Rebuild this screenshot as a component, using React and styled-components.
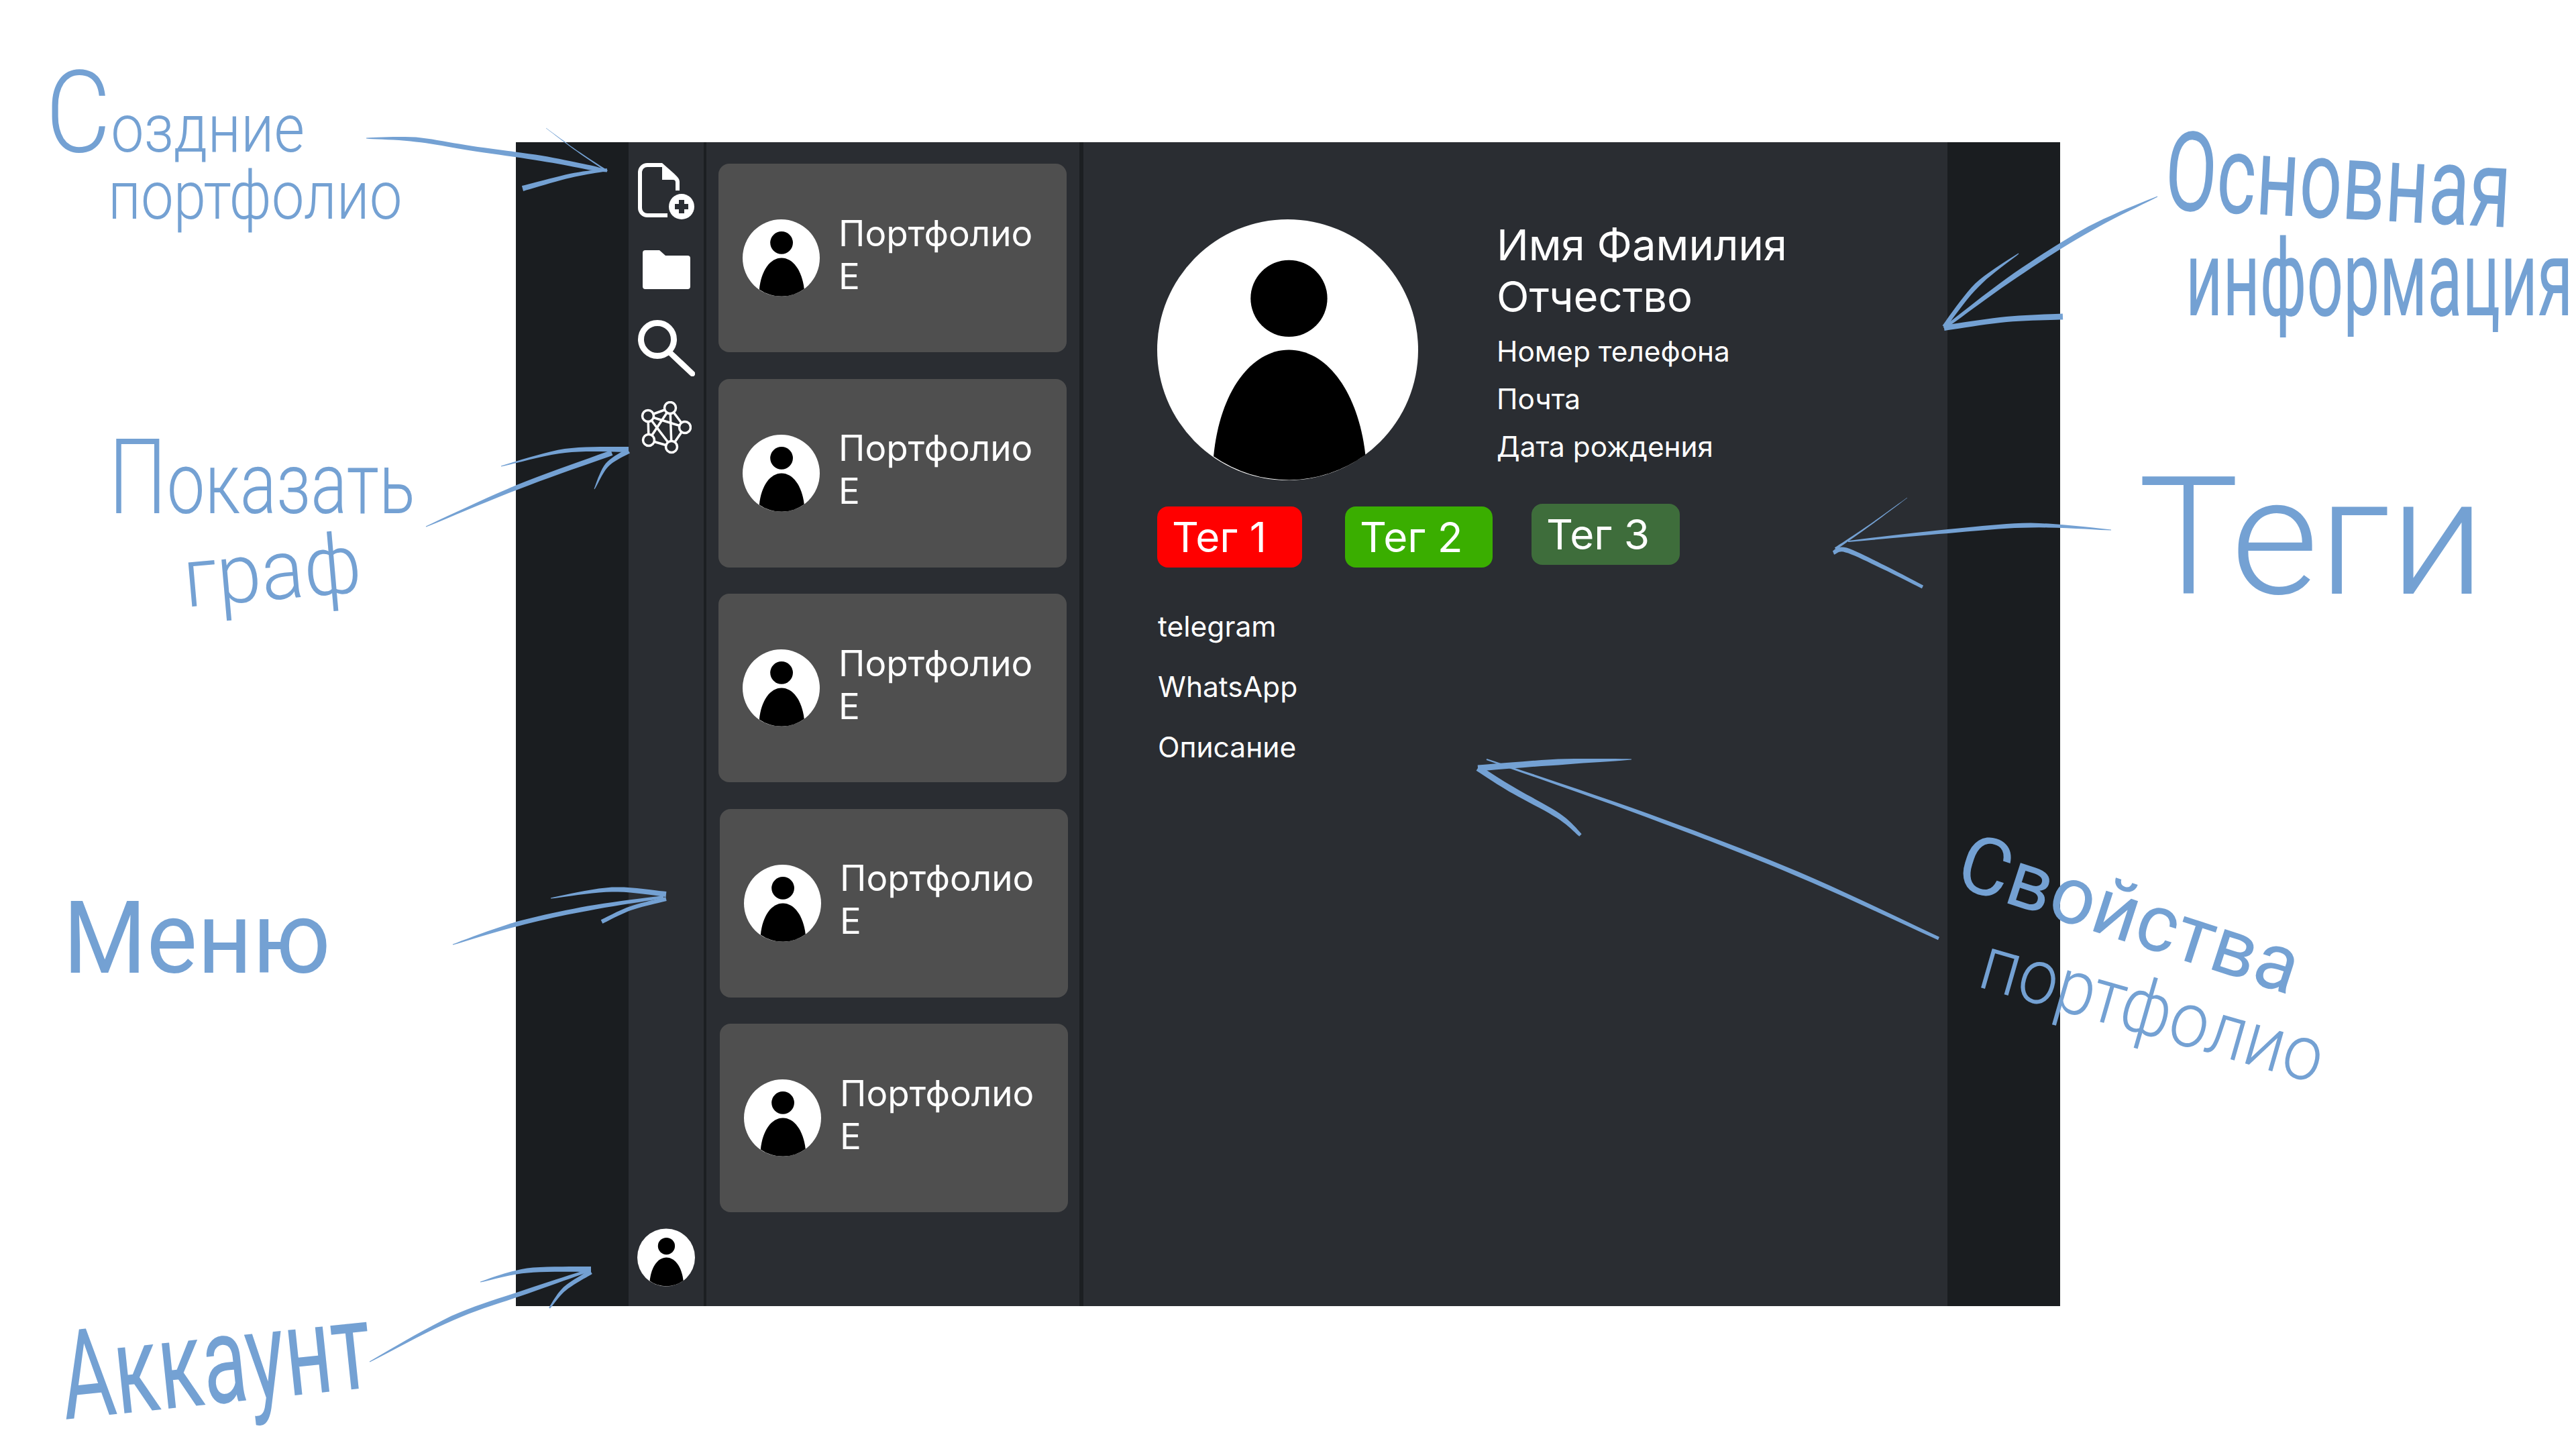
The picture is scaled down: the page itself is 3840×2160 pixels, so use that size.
import React from 'react';
import styled, { createGlobalStyle } from 'styled-components';

const GlobalStyle = createGlobalStyle`
    html, body {
        margin: 0;
        padding: 0;
        background: #fff;
    }
    body {
        font-family: "Inter", "Liberation Sans", sans-serif;
    }
`;

const Canvas = styled.div`
    position: relative;
    width: 3840px;
    height: 2160px;
    padding: 212px 0 0 769px;
    box-sizing: border-box;
    overflow: hidden;
    background: #fff;
`;

const Window = styled.div`
    display: flex;
    width: 2302px;
    height: 1735px;
    color: #fff;
    background: #2a2d32;
`;

const Strip = styled.div`
    flex: 0 0 ${({ $width }) => $width}px;
    background: #1a1d20;
`;

const Sidebar = styled.nav`
    flex: 0 0 112px;
    display: flex;
    flex-direction: column;
    align-items: center;
    padding: 31px 0 29px;
    border-right: 4px solid #1c1f22;
`;

const IconButton = styled.div`
    display: flex;
    margin-top: ${({ $top }) => $top || 0}px;
`;

const AccountSlot = styled.div`
    margin-top: auto;
    width: 86px;
    height: 87px;
`;

const ListPanel = styled.section`
    flex: 0 0 538px;
    display: flex;
    flex-direction: column;
    gap: 39.6px;
    padding: 32px 0 0 18px;
    border-right: 6px solid #1c1f22;
`;

const Card = styled.article`
    display: flex;
    align-items: center;
    gap: 28px;
    width: 519px;
    height: 281px;
    margin-left: ${({ $shift }) => ($shift ? 2 : 0)}px;
    padding-left: 36px;
    box-sizing: border-box;
    border-radius: 16px;
    background: #4f4f4f;
`;

const CardAvatar = styled.div`
    flex: 0 0 115px;
    height: 115px;
`;

const CardText = styled.div`
    padding-bottom: 10px;
    font-size: 53px;
    line-height: 64px;
`;

const Main = styled.main`
    flex: 1;
    padding: 115px 0 0 110px;
`;

const Profile = styled.div`
    display: flex;
    gap: 117px;
`;

const BigAvatar = styled.div`
    flex: 0 0 389px;
    height: 389px;
`;

const Name = styled.h1`
    margin: 0;
    font-size: 63.4px;
    font-weight: 400;
    line-height: 77px;
`;

const Details = styled.ul`
    margin: 7px 0 0;
    padding: 0;
    list-style: none;
    font-size: 42.3px;
    line-height: 71px;
`;

const TagRow = styled.div`
    display: flex;
    align-items: flex-start;
    margin-top: 35px;
`;

const Tag = styled.span`
    width: ${({ $width }) => $width}px;
    height: 91px;
    margin-top: ${({ $top }) => $top || 0}px;
    margin-left: ${({ $left }) => $left || 0}px;
    padding-left: 22px;
    box-sizing: border-box;
    border-radius: 16px;
    font-size: 62px;
    line-height: 91px;
    background: ${({ $color }) => $color};
`;

const Contacts = styled.ul`
    margin: 43px 0 0 1px;
    padding: 0;
    list-style: none;
    font-size: 42.5px;
    line-height: 90px;
`;

const Overlay = styled.svg`
    position: absolute;
    top: 0;
    left: 0;
    pointer-events: none;
`;

const Note = styled.span`
    position: absolute;
    left: ${({ $x }) => $x}px;
    top: ${({ $base, $size }) => $base - $size * 0.84}px;
    font-family: "Roboto", "Liberation Sans", sans-serif;
    font-size: ${({ $size }) => $size}px;
    font-weight: ${({ $weight }) => $weight || 300};
    line-height: 1;
    white-space: nowrap;
    color: #74a1d3;
    transform-origin: 0 84%;
    transform: rotate(${({ $rotate }) => $rotate || 0}deg) scaleX(${({ $stretch }) => $stretch});
`;

const Initial = styled.span`
    font-size: ${({ $size }) => $size}px;
    line-height: 0;
`;

// tapered marker stroke: points are [x, y, width]
const brush = (points) => {
    const smooth = [];
    for (let i = 0; i < points.length - 1; i++) {
        const p0 = points[Math.max(i - 1, 0)];
        const p1 = points[i];
        const p2 = points[i + 1];
        const p3 = points[Math.min(i + 2, points.length - 1)];
        for (let s = 0; s < 10; s++) {
            const t = s / 10;
            const at = (k) => 0.5 * (2 * p1[k] + (p2[k] - p0[k]) * t
                + (2 * p0[k] - 5 * p1[k] + 4 * p2[k] - p3[k]) * t * t
                + (3 * p1[k] - p0[k] - 3 * p2[k] + p3[k]) * t * t * t);
            smooth.push([at(0), at(1), p1[2] + (p2[2] - p1[2]) * t]);
        }
    }
    smooth.push(points[points.length - 1]);
    const left = [];
    const right = [];
    smooth.forEach((p, i) => {
        const a = smooth[Math.max(i - 1, 0)];
        const b = smooth[Math.min(i + 1, smooth.length - 1)];
        const dx = b[0] - a[0];
        const dy = b[1] - a[1];
        const len = Math.hypot(dx, dy) || 1;
        left.push(`${(p[0] - dy / len * p[2] / 2).toFixed(1)} ${(p[1] + dx / len * p[2] / 2).toFixed(1)}`);
        right.unshift(`${(p[0] + dy / len * p[2] / 2).toFixed(1)} ${(p[1] - dx / len * p[2] / 2).toFixed(1)}`);
    });
    return `M${left.join('L')}L${right.join('L')}Z`;
};

const strokes = [
    // создание
    [[546, 206, 1], [620, 208, 7], [702, 221, 7], [807, 236, 8], [880, 250, 7], [905, 255, 3]],
    [[814, 191, 0.5], [860, 225, 1.5], [905, 255, 2.5]],
    [[905, 253, 4], [850, 262, 6], [779, 281, 8]],
    // граф
    [[635, 785, 1], [772, 726, 7], [912, 675, 8]],
    [[747, 695, 1], [842, 672, 6], [937, 670, 8]],
    [[937, 672, 8], [905, 693, 6], [886, 729, 1]],
    // меню
    [[675, 1408, 1], [772, 1377, 7], [877, 1354, 7], [989, 1337, 4]],
    [[821, 1339, 1], [912, 1326, 7], [993, 1333, 8]],
    [[993, 1340, 6], [940, 1354, 6], [897, 1374, 6]],
    // аккаунт
    [[551, 2030, 1], [674, 1965, 7], [786, 1925, 7], [877, 1894, 4]],
    [[716, 1911, 1], [786, 1894, 7], [881, 1892, 8]],
    [[881, 1896, 7], [842, 1921, 6], [819, 1950, 2]],
    // основная информация
    [[3216, 293, 1], [3115, 341, 8], [3005, 410, 8], [2898, 489, 4]],
    [[3009, 378, 1], [2947, 425, 7], [2898, 487, 6]],
    [[2898, 489, 8], [2991, 476, 8], [3075, 472, 9]],
    // теги
    [[3147, 790, 1], [3027, 783, 7], [2904, 792, 6], [2755, 807, 2]],
    [[2843, 742, 0.5], [2787, 783, 2], [2736, 818, 4]],
    [[2733, 824, 6], [2752, 820, 7], [2809, 846, 6], [2866, 875, 5]],
    // свойства
    [[2890, 1399, 5], [2680, 1303, 7], [2457, 1216, 6], [2216, 1132, 2]],
    [[2432, 1132, 1], [2323, 1136, 9], [2203, 1145, 9]],
    [[2203, 1145, 9], [2252, 1176, 9], [2323, 1216, 8], [2356, 1245, 5]],
];

const Avatar = () => (
    <svg width="100%" height="100%" viewBox="0 0 100 100" style={{ display: 'block' }}>
        <circle cx="50" cy="50" r="50" fill="#fff" />
        <circle cx="50.5" cy="30.3" r="14.7" fill="#000" />
        <path d="M21.6 90.8C24 66 36 50 50.5 50C65 50 77 66 79.8 90.2A50 50 0 0 1 21.6 90.8Z" fill="#000" />
    </svg>
);

const NewFileIcon = () => (
    <svg width="84" height="84" viewBox="0 0 84 84">
        <path d="M44 78H14A11 11 0 0 1 3 67V14A11 11 0 0 1 14 3H36" fill="none" stroke="#fff" strokeWidth="6" />
        <path d="M36 0L53 15C58 20 62 23 62 28V41H56V29C56 26.5 55 25 52 25H36Z" fill="#fff" />
        <circle cx="65" cy="65" r="19" fill="#fff" />
        <path d="M61 55H69V61H75V69H69V75H61V69H55V61H61Z" fill="#2a2d32" />
    </svg>
);

const FolderIcon = () => (
    <svg width="71" height="58" viewBox="0 0 71 58">
        <path d="M4 0H25L34 8H67A4 4 0 0 1 71 12V54A4 4 0 0 1 67 58H4A4 4 0 0 1 0 54V4A4 4 0 0 1 4 0Z" fill="#fff" />
    </svg>
);

const SearchIcon = () => (
    <svg width="85" height="84" viewBox="0 0 85 84" fill="none" stroke="#fff">
        <circle cx="29" cy="29" r="24.5" strokeWidth="9" />
        <path d="M47 48L81 80" strokeWidth="8.5" strokeLinecap="round" />
    </svg>
);

const nodes = [[44, 10], [11, 22], [66, 39], [12, 58], [46, 68]];
const edges = [[0, 1], [0, 2], [0, 3], [0, 4], [1, 2], [1, 3], [1, 4], [2, 4], [3, 4]];

const GraphIcon = () => (
    <svg width="76" height="79" viewBox="0 0 76 79" stroke="#fff" strokeWidth="3.5">
        {edges.map(([a, b]) => (
            <line key={`${a}-${b}`} x1={nodes[a][0]} y1={nodes[a][1]} x2={nodes[b][0]} y2={nodes[b][1]} />
        ))}
        {nodes.map(([x, y]) => (
            <circle key={x} cx={x} cy={y} r="8.5" fill="#2a2d32" />
        ))}
    </svg>
);

const cards = [false, false, false, true, true];

const App = () => (
    <Canvas>
        <GlobalStyle />
        <Window>
            <Strip $width={168} />
            <Sidebar>
                <IconButton><NewFileIcon /></IconButton>
                <IconButton $top={46}><FolderIcon /></IconButton>
                <IconButton $top={46}><SearchIcon /></IconButton>
                <IconButton $top={37}><GraphIcon /></IconButton>
                <AccountSlot><Avatar /></AccountSlot>
            </Sidebar>
            <ListPanel>
                {cards.map((shift, i) => (
                    <Card key={i} $shift={shift}>
                        <CardAvatar><Avatar /></CardAvatar>
                        <CardText>Портфолио<br />Е</CardText>
                    </Card>
                ))}
            </ListPanel>
            <Main>
                <Profile>
                    <BigAvatar><Avatar /></BigAvatar>
                    <div>
                        <Name>Имя Фамилия<br />Отчество</Name>
                        <Details>
                            <li>Номер телефона</li>
                            <li>Почта</li>
                            <li>Дата рождения</li>
                        </Details>
                    </div>
                </Profile>
                <TagRow>
                    <Tag $color="#ff0000" $width={216} $top={4}>Тег 1</Tag>
                    <Tag $color="#3aae00" $width={220} $top={4} $left={64}>Тег 2</Tag>
                    <Tag $color="#3e6d3b" $width={221} $left={58}>Тег 3</Tag>
                </TagRow>
                <Contacts>
                    <li>telegram</li>
                    <li>WhatsApp</li>
                    <li>Описание</li>
                </Contacts>
            </Main>
            <Strip $width={168} />
        </Window>

        <Overlay width="3840" height="2160" viewBox="0 0 3840 2160" fill="#74a1d3">
            {strokes.map((points, i) => <path key={i} d={brush(points)} />)}
        </Overlay>

        <Note $x={68} $base={226} $size={100} $stretch={0.88}><Initial $size={170}>С</Initial>оздние</Note>
        <Note $x={161} $base={326} $size={100} $stretch={0.87}>портфолио</Note>
        <Note $x={162} $base={765} $size={128} $stretch={0.79}><Initial $size={155}>П</Initial>оказать</Note>
        <Note $x={277} $base={905} $size={125} $stretch={0.95} $rotate={-5}>граф</Note>
        <Note $x={94} $base={1450} $size={150} $stretch={0.95} $weight={400}>Меню</Note>
        <Note $x={97} $base={2115} $size={185} $stretch={0.66} $rotate={-6} $weight={400}>Аккаунт</Note>
        <Note $x={3225} $base={312} $size={165} $stretch={0.68} $rotate={3} $weight={400}>Основная</Note>
        <Note $x={3258} $base={470} $size={160} $stretch={0.6} $weight={400}>информация</Note>
        <Note $x={3187} $base={885} $size={245} $stretch={1.03}>Теги</Note>
        <Note $x={2911} $base={1320} $size={120} $stretch={0.98} $rotate={18} $weight={400}>Свойства</Note>
        <Note $x={2945} $base={1470} $size={115} $stretch={0.91} $rotate={16}>портфолио</Note>
    </Canvas>
);

export default App;
